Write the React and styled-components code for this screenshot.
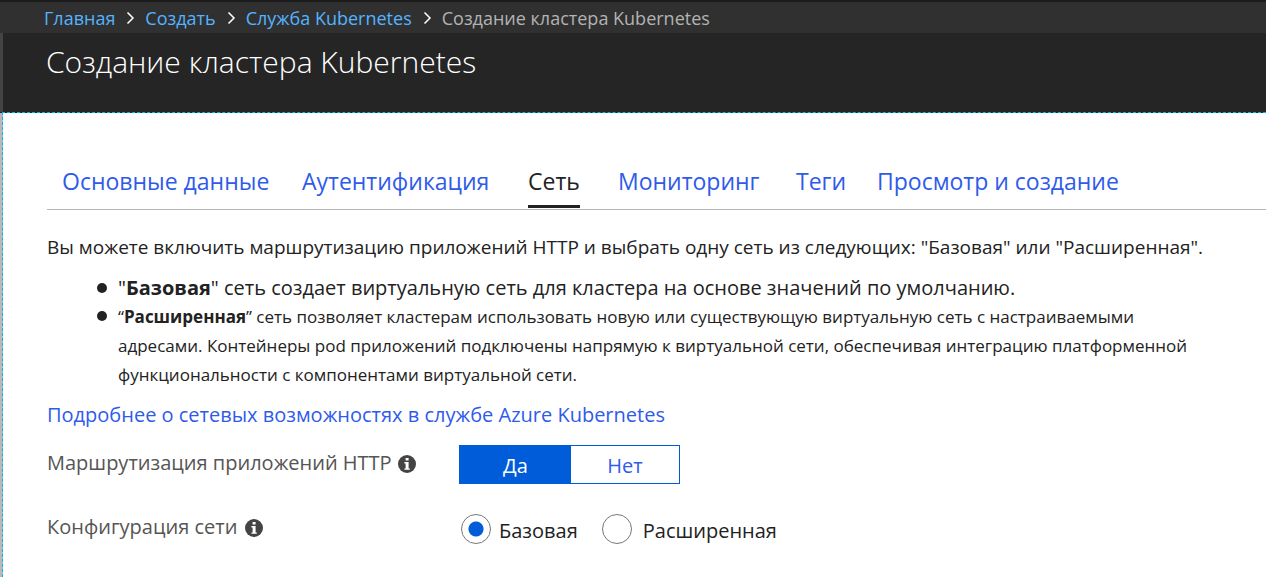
import React, { useState } from "react";
import styled, { createGlobalStyle } from "styled-components";

const GlobalStyle = createGlobalStyle`
  *, *::before, *::after { box-sizing: border-box; }
  html, body, #root { min-height: 100vh; }
  body {
    margin: 0;
    background: #ffffff;
    color: #222222;
    font-family: "Open Sans", "Noto Sans", sans-serif;
    font-size: 20px;
  }
  #root { display: flex; flex-direction: column; }
`;

const Page = styled.div`
  flex: 1;
  display: flex;
  flex-direction: column;
  overflow: hidden;
`;

const Breadcrumbs = styled.nav`
  display: flex;
  align-items: center;
  gap: 8px;
  padding: 4px 44px 3px;
  border-top: 2px solid #1b1b1b;
  background: #303030;
  color: #b3b3b3;
  font-size: 18px;
  line-height: 24px;
  white-space: nowrap;
`;

const Crumb = styled.a`
  color: #55b3ff;
  text-decoration: none;
`;

const Chevron = styled.svg`
  width: 14px;
  height: 16px;
  fill: none;
  stroke: #ffffff;
  stroke-width: 1.5;
`;

const Header = styled.header`
  padding: 7px 43px 28px;
  border-left: 3px solid #444444;
  background: #252525;
  color: #ffffff;
`;

const Title = styled.h1`
  margin: 0;
  font-size: 30px;
  font-weight: 300;
  line-height: 44px;
`;

const Blade = styled.div`
  flex: 1;
  display: flex;
  padding-left: 2px;
  background: linear-gradient(to bottom, #252525 1px, #b8b8b8 1px);
`;

const Panel = styled.main`
  flex: 1;
  min-width: 0;
  padding: 48px 0 24px 44px;
  border-top: 1px dashed #00b7ee;
  border-left: 1px dashed #00b7ee;
  background: #ffffff padding-box;
`;

const Tabs = styled.nav`
  display: grid;
  grid-template-columns: 240px 226px 90px 178px 81px auto;
  padding-left: 15px;
  border-bottom: 1px solid #b5b5b5;
`;

const Tab = styled.a`
  justify-self: start;
  height: 47px;
  margin-bottom: 1px;
  border-bottom: 3px solid ${(p) => (p.$active ? "#222222" : "transparent")};
  color: ${(p) => (p.$active ? "#222222" : "#2f5bea")};
  font-size: 23px;
  line-height: 40px;
  text-decoration: none;
  white-space: nowrap;
`;

const Intro = styled.p`
  margin: 22px 0 12px;
  font-size: 19px;
  line-height: 30px;
`;

const Bullets = styled.ul`
  margin: 0 48px 0 0;
  padding-left: 71px;
  list-style: none;
`;

const Bullet = styled.li`
  position: relative;
  font-size: ${(p) => (p.$compact ? "17px" : "20px")};
  line-height: ${(p) => (p.$compact ? "29px" : "28px")};

  &::before {
    content: "";
    position: absolute;
    top: 9px;
    left: -21px;
    width: 10px;
    height: 10px;
    border-radius: 50%;
    background: #222222;
  }
`;

const LearnMore = styled.a`
  display: inline-block;
  margin-top: 10px;
  color: #2f5bea;
  font-size: 20px;
  line-height: 32px;
  text-decoration: none;
`;

const Field = styled.div`
  display: grid;
  grid-template-columns: 412px auto;
  align-items: center;
  justify-content: start;
  margin-top: ${(p) => p.$space};
`;

const FieldLabel = styled.div`
  display: flex;
  align-items: center;
  gap: ${(p) => p.$gap};
  padding-bottom: 4px;
  color: #555555;
  font-size: 20px;
  line-height: 30px;
`;

const Info = styled.svg`
  width: 18px;
  height: 18px;
  margin-top: 2px;
`;

const Toggle = styled.div`
  display: grid;
  grid-template-columns: 111px 108px;
  height: 39px;
  border: 1px solid #015cda;
`;

const ToggleButton = styled.button`
  padding: 2px 0 0;
  border: 0;
  background: ${(p) => (p.$on ? "#015cda" : "#ffffff")};
  color: ${(p) => (p.$on ? "#ffffff" : "#2f5bea")};
  font-family: inherit;
  font-size: 20px;
`;

const Radios = styled.div`
  display: flex;
  gap: 24px;
  padding-left: 2px;
`;

const RadioLabel = styled.label`
  display: flex;
  align-items: center;
  gap: ${(p) => p.$gap};
  line-height: 30px;
`;

const RadioText = styled.span`
  padding-top: 3px;
`;

const Radio = styled.input`
  appearance: none;
  width: 30px;
  height: 30px;
  margin: 0;
  border: 1px solid #777777;
  border-radius: 50%;
  background: #ffffff;

  &:checked {
    background: radial-gradient(circle, #015cda 7px, #ffffff 8px);
  }
`;

function Separator() {
  return (
    <Chevron viewBox="0 0 14 16" aria-hidden="true">
      <path d="M4.5 2.5 L10 8 L4.5 13.5" />
    </Chevron>
  );
}

function InfoIcon() {
  return (
    <Info viewBox="0 0 18 18" aria-hidden="true">
      <circle cx="9" cy="9" r="9" fill="#444444" />
      <path
        d="M7.6 3h3v2.6h-3zM6.4 7h4.2v6.4h1.2v1.4H6.4v-1.4h1.2V8.4H6.4z"
        fill="#ffffff"
      />
    </Info>
  );
}

const TABS = [
  "Основные данные",
  "Аутентификация",
  "Сеть",
  "Мониторинг",
  "Теги",
  "Просмотр и создание",
];

export default function App() {
  const [tab, setTab] = useState("Сеть");
  const [routing, setRouting] = useState(true);
  const [config, setConfig] = useState("basic");

  return (
    <Page>
      <GlobalStyle />
      <Breadcrumbs>
        <Crumb href="#home">Главная</Crumb>
        <Separator />
        <Crumb href="#new">Создать</Crumb>
        <Separator />
        <Crumb href="#service">Служба Kubernetes</Crumb>
        <Separator />
        <span>Создание кластера Kubernetes</span>
      </Breadcrumbs>
      <Header>
        <Title>Создание кластера Kubernetes</Title>
      </Header>
      <Blade>
        <Panel>
          <Tabs>
            {TABS.map((name) => (
              <Tab
                key={name}
                href="#tab"
                $active={name === tab}
                onClick={() => setTab(name)}
              >
                {name}
              </Tab>
            ))}
          </Tabs>
          <Intro>
            Вы можете включить маршрутизацию приложений HTTP и выбрать одну сеть
            из следующих: "Базовая" или "Расширенная".
          </Intro>
          <Bullets>
            <Bullet>
              "<b>Базовая</b>" сеть создает виртуальную сеть для кластера на
              основе значений по умолчанию.
            </Bullet>
            <Bullet $compact>
              “<b>Расширенная</b>” сеть позволяет кластерам использовать новую
              или существующую виртуальную сеть с настраиваемыми адресами.
              Контейнеры pod приложений подключены напрямую к виртуальной сети,
              обеспечивая интеграцию платформенной функциональности с
              компонентами виртуальной сети.
            </Bullet>
          </Bullets>
          <LearnMore href="#learn">
            Подробнее о сетевых возможностях в службе Azure Kubernetes
          </LearnMore>
          <Field $space="14px">
            <FieldLabel id="routing" $gap="6px">
              Маршрутизация приложений HTTP
              <InfoIcon />
            </FieldLabel>
            <Toggle role="group" aria-labelledby="routing">
              <ToggleButton
                type="button"
                $on={routing}
                aria-pressed={routing}
                onClick={() => setRouting(true)}
              >
                Да
              </ToggleButton>
              <ToggleButton
                type="button"
                $on={!routing}
                aria-pressed={!routing}
                onClick={() => setRouting(false)}
              >
                Нет
              </ToggleButton>
            </Toggle>
          </Field>
          <Field $space="28px">
            <FieldLabel id="config" $gap="8px">
              Конфигурация сети
              <InfoIcon />
            </FieldLabel>
            <Radios role="radiogroup" aria-labelledby="config">
              <RadioLabel $gap="8px">
                <Radio
                  type="radio"
                  name="config"
                  checked={config === "basic"}
                  onChange={() => setConfig("basic")}
                />
                <RadioText>Базовая</RadioText>
              </RadioLabel>
              <RadioLabel $gap="11px">
                <Radio
                  type="radio"
                  name="config"
                  checked={config === "advanced"}
                  onChange={() => setConfig("advanced")}
                />
                <RadioText>Расширенная</RadioText>
              </RadioLabel>
            </Radios>
          </Field>
        </Panel>
      </Blade>
    </Page>
  );
}
